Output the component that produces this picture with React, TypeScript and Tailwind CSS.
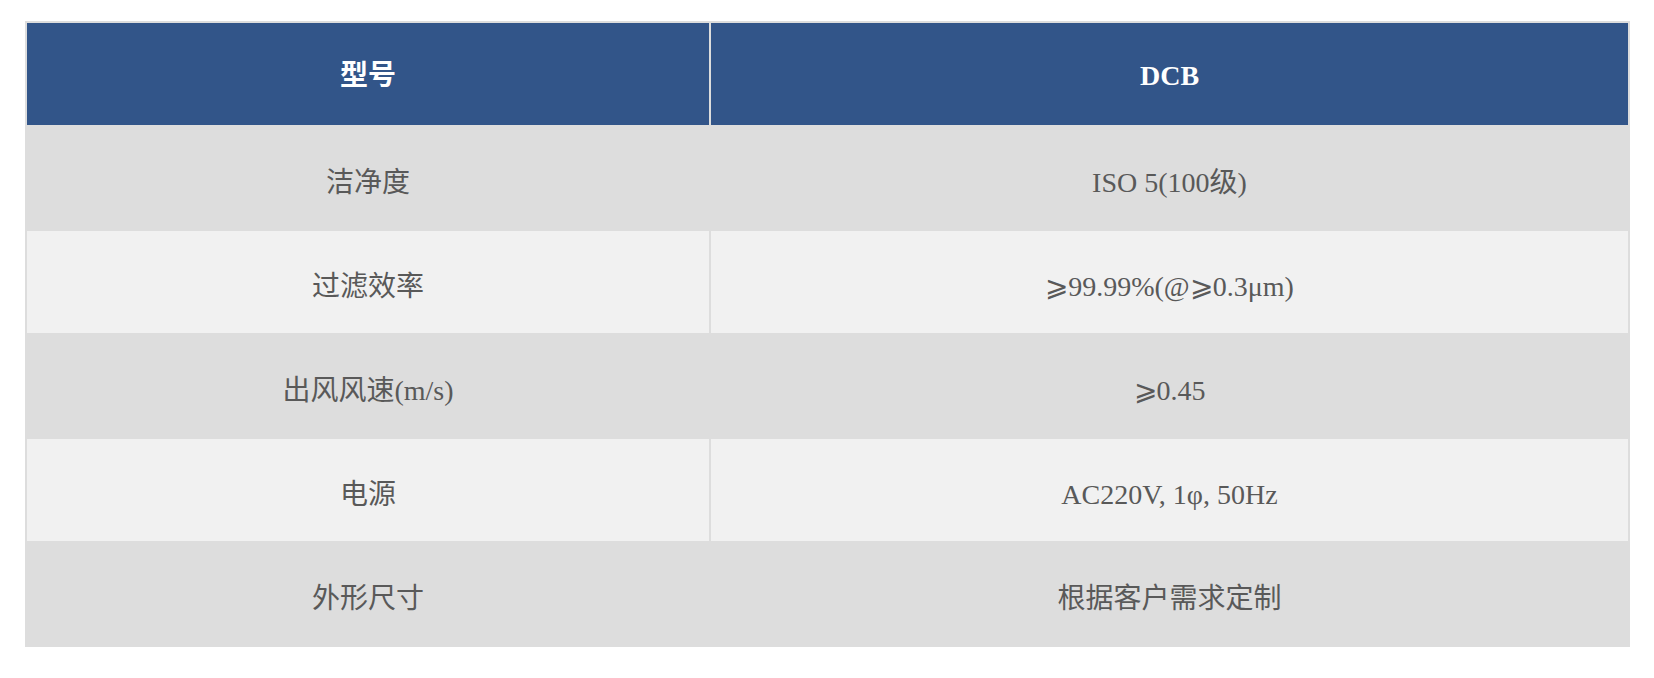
const rows: [string, string][] = [
  ['洁净度', 'ISO 5(100级)'],
  ['过滤效率', '⩾99.99%(@⩾0.3μm)'],
  ['出风风速(m/s)', '⩾0.45'],
  ['电源', 'AC220V, 1φ, 50Hz'],
  ['外形尺寸', '根据客户需求定制'],
];

export default function App() {
  return (
    <div className="min-h-[678px] bg-white pt-[21px] pl-[25px]">
      <div
        className="grid w-[1605px] grid-cols-[682px_917px] gap-[2px] bg-[#dddddd] p-[2px] text-[28px]"
        style={{ fontFamily: '"Liberation Serif", "Noto Sans CJK SC", serif' }}
      >
        {/* header */}
        <div className="flex h-[102px] items-center justify-center bg-[#325589] pt-[4px] font-bold text-white">型号</div>
        <div className="flex h-[102px] items-center justify-center bg-[#325589] pt-[4px] font-bold text-white">DCB</div>

        {rows.map(([label, value], i) => {
          const bg = i % 2 === 0 ? 'bg-[#dddddd]' : 'bg-[#f1f1f1]';
          return [
            <div key={label} className={`flex h-[102px] items-center justify-center pt-[9px] text-[#595959] ${bg}`}>
              {label}
            </div>,
            <div key={label + '-v'} className={`flex h-[102px] items-center justify-center pt-[9px] text-[#595959] ${bg}`}>
              {value}
            </div>,
          ];
        })}
      </div>
    </div>
  );
}
